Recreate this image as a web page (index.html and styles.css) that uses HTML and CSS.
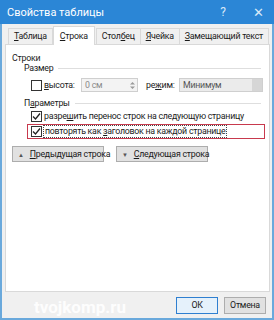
FILE: index.html
```html
<!DOCTYPE html>
<html lang="ru">
<head>
    <meta charset="UTF-8">
    <title>Свойства таблицы</title>
    <link rel="stylesheet" href="styles.css">
</head>
<body>
    <div class="window">
        <!-- заголовок окна -->
        <div class="titlebar">
            <span class="title">Свойства таблицы</span>
            <span class="tb-btn help">?</span>
            <span class="tb-btn close">✕</span>
        </div>

        <!-- вкладки -->
        <div class="tabs">
            <span class="tab"><u>Т</u>аблица</span>
            <span class="tab active"><u>С</u>трока</span>
            <span class="tab">Стол<u>б</u>ец</span>
            <span class="tab"><u>Я</u>чейка</span>
            <span class="tab"><u>З</u>амещающий текст</span>
        </div>

        <div class="panel">
            <div class="heading">Строки</div>

            <div class="group">
                <div class="group-head"><span>Размер</span><i class="line"></i></div>
                <div class="size-row">
                    <span class="check"></span>
                    <span class="label"><u>в</u>ысота:</span>
                    <span class="spin">
                        <span class="spin-val">0 см</span>
                        <span class="spin-btns">
                            <svg width="5" height="9" viewBox="0 0 5 9"><path d="M0 3.5 L2.5 1 L5 3.5 Z M0 5.5 L2.5 8 L5 5.5 Z" fill="#9a9a9a"/></svg>
                        </span>
                    </span>
                    <span class="label mode">ре<u>ж</u>им:</span>
                    <span class="select">Минимум<i class="drop"></i></span>
                </div>

                <div class="group-head params"><span>П<u>а</u>раметры</span><i class="line"></i></div>
                <div class="opt">
                    <span class="check on"><svg width="9" height="9" viewBox="0 0 9 9"><path d="M1 4.5 L3.5 7 L8 1.5" fill="none" stroke="#222" stroke-width="1.3"/></svg></span>
                    <span>разре<u>ш</u>ить перенос строк на следующую страницу</span>
                </div>
                <div class="opt marked">
                    <span class="check on"><svg width="9" height="9" viewBox="0 0 9 9"><path d="M1 4.5 L3.5 7 L8 1.5" fill="none" stroke="#222" stroke-width="1.3"/></svg></span>
                    <span class="focus">повторять как <u>з</u>аголовок на каждой странице</span>
                </div>
            </div>

            <div class="nav">
                <span class="btn nav-btn"><span class="arrow">▲</span><u>П</u>редыдущая строка</span>
                <span class="btn nav-btn"><span class="arrow">▼</span><u>С</u>ледующая строка</span>
            </div>
        </div>

        <div class="footer">
            <span class="mark">tvojkomp.ru</span>
            <span class="btn wide default">ОК</span>
            <span class="btn wide">Отмена</span>
        </div>
    </div>
</body>
</html>
```

FILE: styles.css
```css
body {
    margin: 0;
    font-family: Roboto, "Noto Sans", sans-serif;
    font-size: 8.8px;
    letter-spacing: -0.25px;
    color: #1a1a1a;
    background: #fff;
}

u {
    text-decoration-thickness: 1px;
    text-underline-offset: 1px;
}

.window {
    width: 274px;
    height: 320px;
    box-sizing: border-box;
    background: #f0f0f0;
    border: 2px solid #6aa9dc;
    border-top: none;
    display: flex;
    flex-direction: column;
}

.titlebar {
    height: 24px;
    margin: 0 -2px;
    background: #2b86d6;
    color: #fff;
    display: flex;
    align-items: center;
    padding-left: 7px;
    font-size: 11px;
    letter-spacing: 0;
}

.title {
    flex: 1;
}

.tb-btn {
    text-align: center;
    color: #d8e9f8;
    font-size: 12px;
}

.tb-btn.help {
    width: 38px;
}

.tb-btn.close {
    width: 32px;
    font-size: 13px;
}

/* вкладки */
.tabs {
    display: flex;
    align-items: flex-end;
    padding-left: 6px;
    margin-top: 3px;
    height: 17px;
    white-space: nowrap;
}

.tab {
    height: 15px;
    line-height: 15px;
    padding: 0 5px;
    border: 1px solid #d9d9d9;
    border-bottom: none;
    margin-right: -1px;
    background: #f0f0f0;
}

.tab.active {
    background: #fff;
    height: 18px;
    line-height: 18px;
    padding: 0 6px;
    position: relative;
    z-index: 1;
    margin: 0 1px -1px;
}

.panel {
    height: 246px;
    margin: 0 2px 0 3px;
    background: #fff;
    border: 1px solid #d9d9d9;
    padding: 0 6px;
}

.heading {
    margin-top: 7px;
    height: 12px;
    line-height: 12px;
}

.group {
    padding-left: 12px;
}

.group-head {
    display: flex;
    align-items: center;
    height: 12px;
    margin-top: -2px;
}

.group-head .line {
    flex: 1;
    height: 1px;
    background: #dedede;
    margin-left: 5px;
    margin-right: 2px;
}

.group-head.params {
    margin-top: 4px;
}

.size-row {
    display: flex;
    align-items: center;
    height: 16px;
    margin-top: 3px;
    padding-left: 7px;
    white-space: nowrap;
}

.check {
    width: 9px;
    height: 9px;
    border: 1px solid #333;
    background: #fff;
    display: inline-flex;
    align-items: center;
    justify-content: center;
    margin-right: 2px;
    flex: none;
}

.label {
    color: #222;
    width: 37px;
}

.spin {
    width: 57px;
    height: 14px;
    box-sizing: border-box;
    border: 1px solid #cfcfcf;
    background: #f3f3f3;
    display: flex;
    align-items: center;
    color: #8a8a8a;
}

.spin-val {
    flex: 1;
    padding-left: 3px;
}

.spin-btns {
    width: 9px;
    display: flex;
    justify-content: center;
}

.label.mode {
    margin-left: 8px;
    width: 33px;
}

.select {
    width: 84px;
    height: 14px;
    box-sizing: border-box;
    border: 1px solid #cfcfcf;
    background: #ebebeb;
    display: flex;
    align-items: center;
    padding-left: 3px;
    color: #555;
}

.select .drop {
    margin-left: auto;
    width: 10px;
    height: 12px;
    background: #d6d6d6;
}

.opt {
    display: flex;
    align-items: center;
    height: 14px;
    margin-left: 7px;
    white-space: nowrap;
}

.opt.marked {
    margin: 1px 0 0 3px;
    padding-left: 3px;
    width: 238px;
    height: 15px;
    box-sizing: border-box;
    border: 1px solid #c8394d;
}

.focus {
    outline: 1px dotted #444;
    padding: 0 1px;
    line-height: 11px;
}

.nav {
    display: flex;
    gap: 12px;
    margin-top: 7px;
    white-space: nowrap;
}

.btn {
    height: 16px;
    box-sizing: border-box;
    border: 1px solid #adadad;
    background: #e1e1e1;
    display: inline-flex;
    align-items: center;
    color: #1a1a1a;
}

.nav-btn {
    width: 92px;
    padding-left: 5px;
}

.arrow {
    font-size: 6px;
    color: #555;
    margin-right: 6px;
}

.footer {
    flex: 1;
    display: flex;
    align-items: center;
    justify-content: flex-end;
    gap: 6px;
    padding-right: 6px;
    position: relative;
}

.btn.wide {
    width: 42px;
    height: 17px;
    justify-content: center;
}

.btn.default {
    border: 1px solid #2f7fd0;
    background: #e5f1fb;
}

.mark {
    position: absolute;
    left: 32px;
    top: 5px;
    color: rgba(255, 255, 255, 0.9);
    font-weight: bold;
    font-size: 17px;
    letter-spacing: 0;
}
```
